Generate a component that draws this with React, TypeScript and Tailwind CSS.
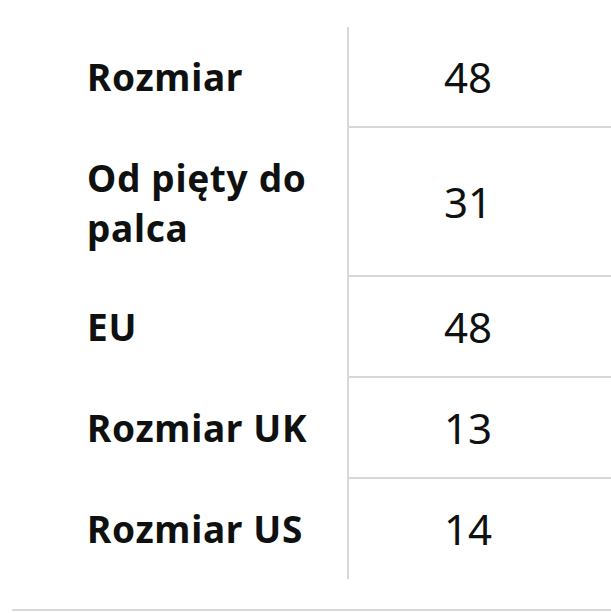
const rows: { label: string; value: string }[] = [
  { label: "Rozmiar", value: "48" },
  { label: "Od pięty do palca", value: "31" },
  { label: "EU", value: "48" },
  { label: "Rozmiar UK", value: "13" },
  { label: "Rozmiar US", value: "14" },
];

export default function App() {
  return (
    <div
      className="w-[611px] h-[613px] bg-white overflow-hidden text-[#0f1111] flex flex-col"
      style={{ fontFamily: '"Noto Sans", "Open Sans", sans-serif' }}
    >
      <div className="mt-[27px] grid grid-cols-[347px_1fr]">
        {rows.map((r, i) => {
          const last = i === rows.length - 1;
          return (
            <div key={r.label} className="contents">
              <div
                className={
                  "pl-[87px] pr-4 pt-[25px] text-[37px] tracking-[0.7px] leading-[50px] font-bold " +
                  (last ? "pb-[25px]" : "pb-[24px]")
                }
              >
                {r.label}
              </div>
              <div
                className={
                  "border-l-2 border-[#d5d9d9] pl-[95px] pt-[25px] text-[42px] leading-[50px] flex items-center " +
                  (last ? "pb-[25px]" : "pb-[24px] border-b-2")
                }
              >
                {r.value}
              </div>
            </div>
          );
        })}
      </div>
      <div className="mt-[30px] ml-[12px] h-[2px] shrink-0 bg-[#d5d9d9]" />
    </div>
  );
}
